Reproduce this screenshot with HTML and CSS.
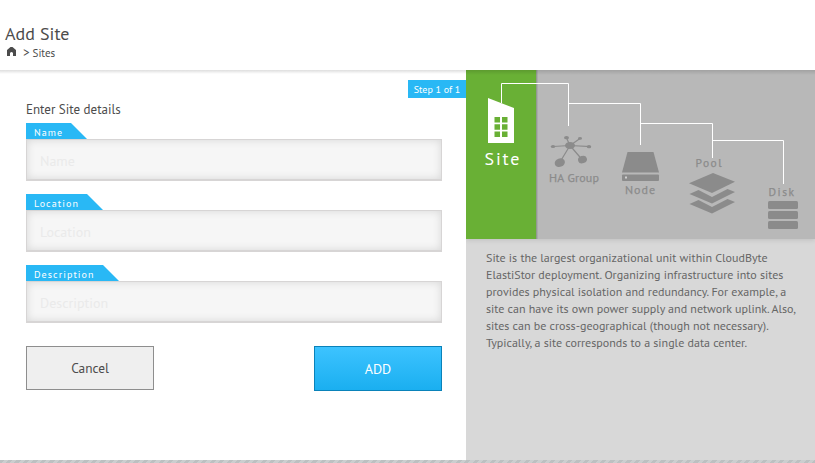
FILE: index.html
```html
<!DOCTYPE html>
<html lang="en">
<head>
<meta charset="utf-8">
<title>Add Site</title>
<link rel="stylesheet" href="styles.css">
</head>
<body>
<header class="header">
  <h1 class="title">Add Site</h1>
  <nav class="crumbs">
    <svg class="home" width="9" height="9" viewBox="0 0 9 9"><path d="M3.500 0H5.500L9 3V9H6V6Q4.500 4 3 6V9H0V3Z"/></svg>
    <span class="sep">&gt;</span><span class="crumb">Sites</span>
  </nav>
</header>
<main class="main">
  <section class="form-pane">
    <div class="step">Step 1 of 1</div>
    <h2 class="form-title">Enter Site details</h2>
    <form class="form">
      <div class="field"><label class="tab tab-name" for="name">Name</label><input class="input" id="name" placeholder="Name"></div>
      <div class="field"><label class="tab tab-location" for="location">Location</label><input class="input" id="location" placeholder="Location"></div>
      <div class="field"><label class="tab tab-description" for="description">Description</label><input class="input" id="description" placeholder="Description"></div>
      <div class="actions">
        <button class="btn cancel" type="button">Cancel</button>
        <button class="btn add" type="button">ADD</button>
      </div>
    </form>
  </section>
  <aside class="info">
    <div class="diagram">
      <svg width="349" height="169" viewBox="466 70 349 169">
        <rect class="active" x="466" y="70" width="70" height="169"/>
        <rect class="edge" x="536" y="70" width="1" height="169"/>
        <rect class="edge-soft" x="537" y="70" width="1" height="169"/>
        <path class="wire" d="M501.500 103V83.500H568.500V126M568.500 103.500H640.500V145M640.500 123.500H712.500V158M712.500 140.500H783.500V184"/>
        <path class="white" d="M488 98 514 108V143H488Z"/>
        <path class="active" d="M494.500 117h5.500v5.500h-5.500zM502 117h5.500v5.500H502zM494.500 124.300h5.500v5.500h-5.500zM502 124.300h5.500v5.500H502zM494.500 131.500h5.500v5.500h-5.500zM502 131.500h5.500v5.500H502z"/>
        <text class="site" x="484.500" y="165" textLength="35">Site</text>
        <g class="icon">
          <path class="spokes" d="M570 145.500 566.500 138M570 145.500 580 138.500M570 145.500 553 146.500M570 145.500 591 146.700M570 145.500 560 162M570 145.500 582 159.500"/>
          <ellipse cx="570" cy="145.500" rx="5" ry="3.500"/>
          <ellipse cx="566.500" cy="137.700" rx="2.500" ry="1.600"/>
          <ellipse cx="580" cy="138.400" rx="2" ry="1.400"/>
          <ellipse cx="553" cy="146.600" rx="2.200" ry="1.500"/>
          <ellipse cx="589" cy="146.700" rx="2.200" ry="1.600"/>
          <ellipse cx="559.800" cy="162.600" rx="5.200" ry="4.200" transform="rotate(-20 559.800 162.600)"/>
          <ellipse cx="582.500" cy="159.600" rx="4.500" ry="3.700" transform="rotate(-20 582.500 159.600)"/>
          <path d="M627.500 152h26L659 172.500H622Z"/>
          <rect x="622" y="174.500" width="37" height="6.500" rx="1"/>
          <rect class="lamp" x="625" y="176.500" width="2" height="2"/>
          <path d="M713 173 735 181.700 712 193 689 183.300Z"/>
          <path d="M698.500 190 689.500 194 712 203.500 735 192 727.500 189 712 197Z"/>
          <path d="M698.500 200 689.500 204 712 213.500 735 202 727.500 199 712 207Z"/>
          <rect x="768" y="201" width="30" height="8" rx="1.500"/>
          <rect x="768" y="211" width="30" height="8" rx="1.500"/>
          <rect x="768" y="221" width="30" height="8" rx="1.500"/>
          <text class="label" x="549" y="182" textLength="50">HA Group</text>
          <text class="label" x="625" y="194" textLength="30">Node</text>
          <text class="label spaced" x="695.500" y="167" textLength="26">Pool</text>
          <text class="label spaced" x="768.500" y="196" textLength="25.500">Disk</text>
        </g>
      </svg>
    </div>
    <p class="copy">
      <span class="line">Site is the largest organizational unit within CloudByte</span>
      <span class="line">ElastiStor deployment. Organizing infrastructure into sites</span>
      <span class="line">provides physical isolation and redundancy. For example, a</span>
      <span class="line">site can have its own power supply and network uplink. Also,</span>
      <span class="line">sites can be cross-geographical (though not necessary).</span>
      <span class="line">Typically, a site corresponds to a single data center.</span>
    </p>
  </aside>
</main>
<footer class="strip"></footer>
</body>
</html>
```
FILE: styles.css
```css
* { box-sizing: border-box; }
body {
  margin: 0;
  height: 463px;
  overflow: hidden;
  display: flex;
  flex-direction: column;
  background: #fff;
  color: #4c4c4c;
  font-family: "PT Sans", "Noto Sans", sans-serif;
}
.header { height: 70px; padding: 23px 5px 0; }
.title { margin: 0; font-size: 18px; font-weight: 400; line-height: 22px; letter-spacing: 0.05px; }
.crumbs { display: flex; align-items: center; height: 16px; padding-left: 2px; font-size: 11px; line-height: 14px; }
.home { fill: #4c4c4c; margin-top: -3px; }
.sep { margin-left: 7px; font-size: 13px; }
.crumb { margin-left: 3px; }
.main { display: flex; height: 390px; }
.form-pane {
  position: relative;
  width: 466px;
  padding: 30px 24px 0 26px;
  background: linear-gradient(rgba(0, 0, 0, 0.13), rgba(0, 0, 0, 0)) 0 0 / 100% 4px no-repeat;
}
.step {
  position: absolute;
  top: 10px;
  right: 0;
  width: 58px;
  height: 18px;
  background: #29b8f5;
  color: #fff;
  font-size: 10px;
  line-height: 19px;
  text-align: center;
  white-space: nowrap;
}
.form-title { margin: 0 0 3px; font-size: 13px; font-weight: 400; line-height: 20px; }
.field { height: 71px; display: flex; flex-direction: column; align-items: flex-start; }
.tab {
  height: 16px;
  padding-left: 8px;
  background: #29b8f5;
  clip-path: polygon(0 0, calc(100% - 16px) 0, 100% 100%, 0 100%);
  color: #fff;
  font-size: 10px;
  line-height: 19px;
  letter-spacing: 1.08px;
}
.tab-name { width: 61px; }
.tab-location { width: 77px; }
.tab-description { width: 93px; }
.input {
  width: 416px;
  height: 42px;
  padding: 3px 13px 0;
  border: 1px solid #d7d5d5;
  border-bottom-width: 2px;
  border-radius: 0;
  outline: 0;
  background: #f6f6f6;
  box-shadow: inset 0 0 8px rgba(0, 0, 0, 0.13);
  font: 14px "PT Sans", "Noto Sans", sans-serif;
}
.input::placeholder { color: #eaeaea; opacity: 1; }
.actions { display: flex; justify-content: space-between; padding-top: 10px; }
.btn { width: 128px; padding: 0; border-radius: 0; font: 13.33px "PT Sans", "Noto Sans", sans-serif; }
.cancel { height: 44px; border: 1px solid #8e8e8e; background: #efefef; color: #4c4c4c; }
.add { height: 45px; border: 1px solid #0a82b9; background: linear-gradient(#3dc3ff, #1aaff0); color: #fff; font-size: 14px; }
.info { width: 349px; background: #d8d8d8; }
.diagram { position: relative; height: 169px; background: #b8b8b8; box-shadow: 0 1px 5px rgba(0, 0, 0, 0.12); clip-path: inset(0 0 -8px 0); }
.diagram::after { content: ""; position: absolute; inset: 0 0 auto; height: 5px; background: linear-gradient(rgba(0, 0, 0, 0.12), rgba(0, 0, 0, 0)); }
.diagram svg { display: block; }
.active { fill: #69b035; }
.edge { fill: #929a90; }
.edge-soft { fill: #aaa; }
.wire { fill: none; stroke: #fff; stroke-width: 1; }
.white { fill: #fff; }
.site { fill: #fff; font-size: 18px; }
.icon { fill: #8b8b8b; }
.label { font-size: 12px; stroke: #8b8b8b; stroke-width: 0.25px; }
.spaced { font-size: 11.5px; }
.spokes { fill: none; stroke: #8b8b8b; stroke-width: 1.2; }
.lamp { fill: #d0d0d0; }
.copy { margin: 0; padding: 10px 0 0 20px; color: #666; font-size: 12px; line-height: 17px; letter-spacing: 0.01px; }
.line { display: block; white-space: nowrap; }
.strip { height: 3px; background: repeating-linear-gradient(135deg, #bcc0c1 0 3px, #cbcecf 3px 6px); }
```
